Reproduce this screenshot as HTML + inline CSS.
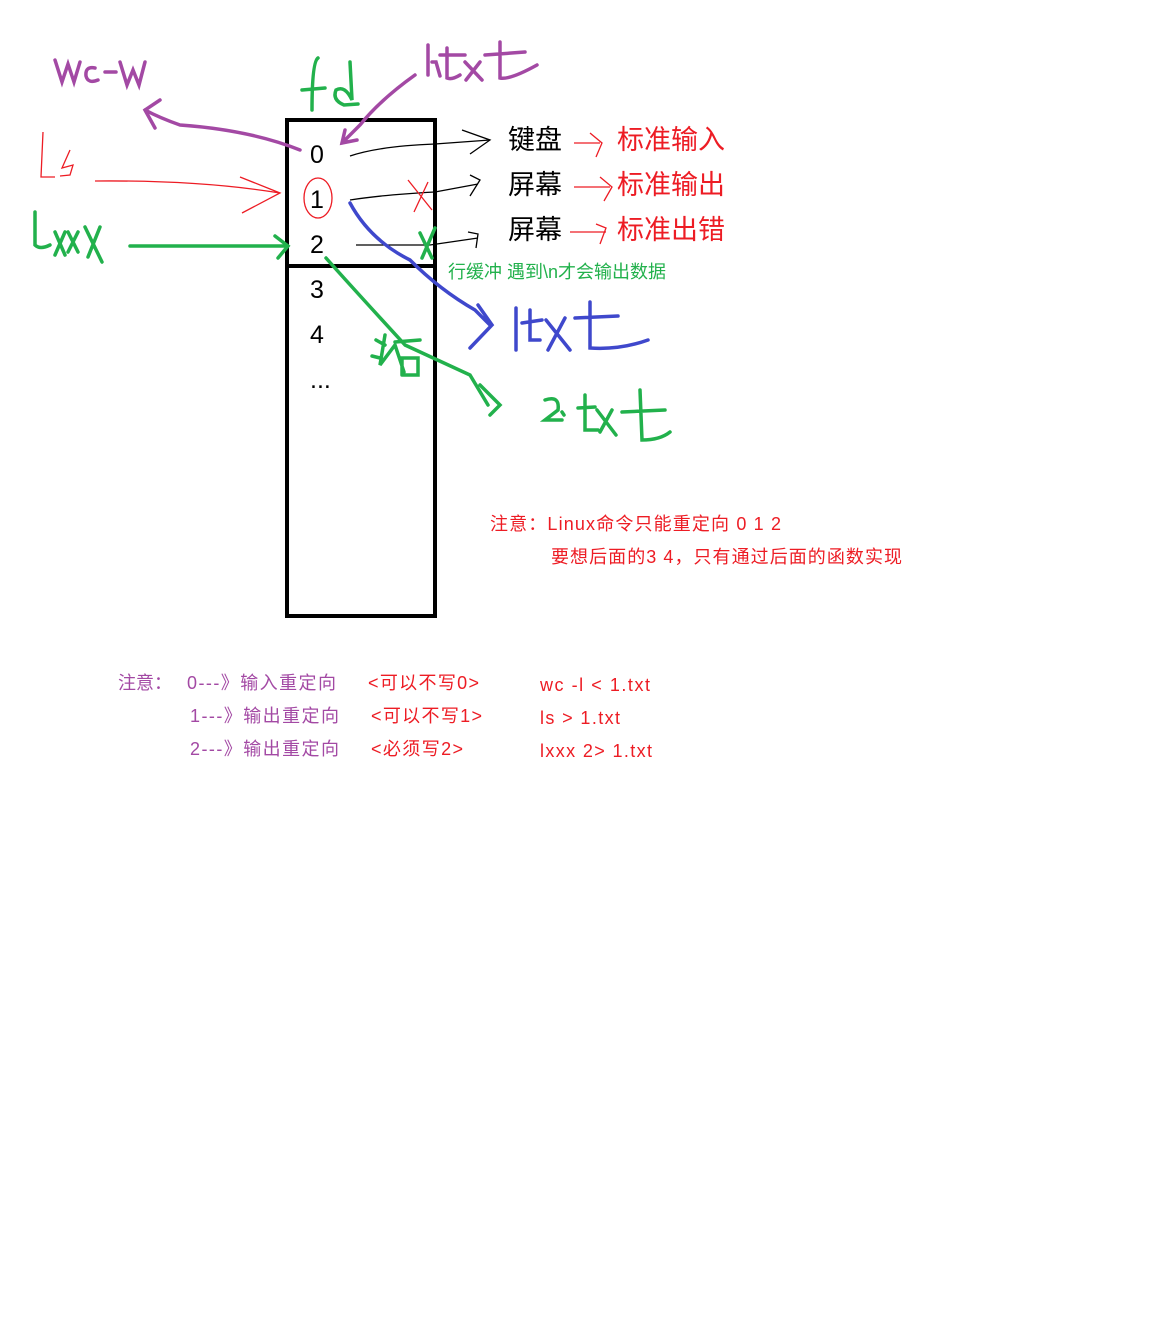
<!DOCTYPE html>
<html><head><meta charset="utf-8"><style>
html,body{margin:0;padding:0;background:#fff;}
svg{display:block;}
text{font-family:"Liberation Sans","Noto Sans CJK SC",sans-serif;}
</style></head><body>
<svg width="1152" height="1318" viewBox="0 0 1152 1318" xmlns="http://www.w3.org/2000/svg">
<rect width="1152" height="1318" fill="#fff"/>
<rect x="287" y="120" width="148" height="496" fill="none" stroke="#000" stroke-width="4"/>
<line x1="287" y1="266" x2="437" y2="266" stroke="#000" stroke-width="4"/>
<g font-size="25" fill="#000">
<text x="310" y="163">0</text>
<text x="310" y="208">1</text>
<text x="310" y="253">2</text>
<text x="310" y="298">3</text>
<text x="310" y="343">4</text>
<text x="310" y="388">...</text>
</g>
<g fill="none" stroke="#000" stroke-width="1.3">
<path d="M350 156 Q380 146 435 144 L490 140"/>
<path d="M462 130 L490 140 L470 154"/>
<path d="M350 200 Q380 195 435 192 L478 184"/>
<path d="M470 175 L480 180 L470 196"/>
<path d="M356 245 L430 245 L478 238"/>
<path d="M468 232 L478 234 L476 248"/>
</g>
<path d="M574 143 L600 143 M590 133 L602 143 L596 157" stroke="#ed1c24" fill="none" stroke-width="1.3"/>
<path d="M574 187 L610 187 M600 177 L612 187 L604 201" stroke="#ed1c24" fill="none" stroke-width="1.3"/>
<path d="M570 232 L606 232 M596 224 L606 228 L600 244" stroke="#ed1c24" fill="none" stroke-width="1.3"/>
<g font-size="27" fill="#000">
<text x="508" y="149">键盘</text>
<text x="508" y="194">屏幕</text>
<text x="508" y="239">屏幕</text>
</g>
<g font-size="27" fill="#ed1c24">
<text x="617" y="149">标准输入</text>
<text x="617" y="194">标准输出</text>
<text x="617" y="239">标准出错</text>
</g>
<text x="448" y="278" font-size="18" fill="#22b14c">行缓冲 遇到\n才会输出数据</text>
<g fill="none" stroke="#ed1c24" stroke-width="1.3">
<path d="M95 181 Q200 180 280 193 M240 177 L280 193 L242 213"/>
<path d="M43 132 L41 177 L55 177 M70 150 L62 168 L73 165 L70 175 L60 176"/>
<ellipse cx="318" cy="198" rx="14" ry="20"/>
<path d="M408 180 L432 210 M428 182 L414 212"/>
</g>
<g fill="none" stroke="#a349a4" stroke-width="3.5" stroke-linecap="round">
<path d="M300 150 Q250 130 180 125 Q160 118 145 110 M160 100 L145 110 L155 128"/>
<path d="M415 75 Q380 100 360 125 L342 143 M345 130 L342 143 L357 140"/>
<path d="M55 60 L62 82 L68 64 L74 82 L80 62 M95 68 Q85 66 86 76 Q88 84 98 80 M105 72 L116 72 M120 62 L127 85 L133 70 L139 85 L145 62"/>
<path d="M428 45 L428 75 M432 62 L436 62 L440 76 M447 48 L447 78 Q452 80 460 75 M440 55 L465 55 M465 62 L482 80 M480 62 L466 80 M500 42 L500 78 Q510 80 537 65 M485 55 L525 52"/>
</g>
<g fill="none" stroke="#22b14c" stroke-width="3.5" stroke-linecap="round">
<path d="M130 246 L285 246 M275 236 L288 246 L278 258"/>
<path d="M35 212 L35 245 Q40 250 50 245 M55 232 L65 255 M65 232 L55 255 M68 232 L78 252 M78 232 L68 252 M85 227 L102 262 M100 227 L88 257"/>
<path d="M318 58 Q312 62 312 110 M302 90 L325 88 M350 62 L352 100 Q345 85 336 90 Q332 100 344 105 L358 104"/>
<path d="M326 258 Q350 285 405 345 L470 375 L488 405 M480 385 L500 405 L490 415"/>
<path d="M420 233 L432 258 M435 228 L422 258"/>
<path d="M545 400 Q560 395 558 410 L545 420 L562 420 M562 412 L564 415 M585 395 L585 430 L598 430 M578 408 L595 407 M597 410 L616 435 M612 410 L600 432 M640 390 L642 440 Q660 440 670 432 M622 412 L665 410"/>
<path d="M376 340 L385 345 M372 356 L380 358 M385 335 L380 365 L395 345 L404 372 M395 342 L420 340 M400 358 L418 358 L418 375 L402 375 M402 358 L402 375"/>
</g>
<g fill="none" stroke="#3f48cc" stroke-width="3.5" stroke-linecap="round">
<path d="M350 203 Q370 240 410 260 Q440 290 475 310 L490 325 M478 305 L492 325 L470 348"/>
<path d="M516 308 L516 350 M530 310 L530 340 L540 340 M522 323 L542 320 M546 320 L570 350 M565 318 L548 350 M590 302 L590 348 Q620 350 648 340 M575 318 L618 316"/>
</g>
<g font-size="18" fill="#ed1c24">
<text x="490" y="530" textLength="291">注意：Linux命令只能重定向 0 1 2</text>
<text x="551" y="563" textLength="351">要想后面的3 4，只有通过后面的函数实现</text>
<text x="368" y="689" textLength="111">&lt;可以不写0&gt;</text>
<text x="371" y="722" textLength="111">&lt;可以不写1&gt;</text>
<text x="371" y="755" textLength="92">&lt;必须写2&gt;</text>
<text x="540" y="691" textLength="110">wc -l &lt; 1.txt</text>
<text x="540" y="724" textLength="80">ls &gt; 1.txt</text>
<text x="540" y="757" textLength="112">lxxx 2&gt; 1.txt</text>
</g>
<g font-size="18" fill="#a349a4">
<text x="118" y="689">注意：</text>
<text x="187" y="689" textLength="149">0---》输入重定向</text>
<text x="190" y="722" textLength="149">1---》输出重定向</text>
<text x="190" y="755" textLength="149">2---》输出重定向</text>
</g>
</svg>
</body></html>
